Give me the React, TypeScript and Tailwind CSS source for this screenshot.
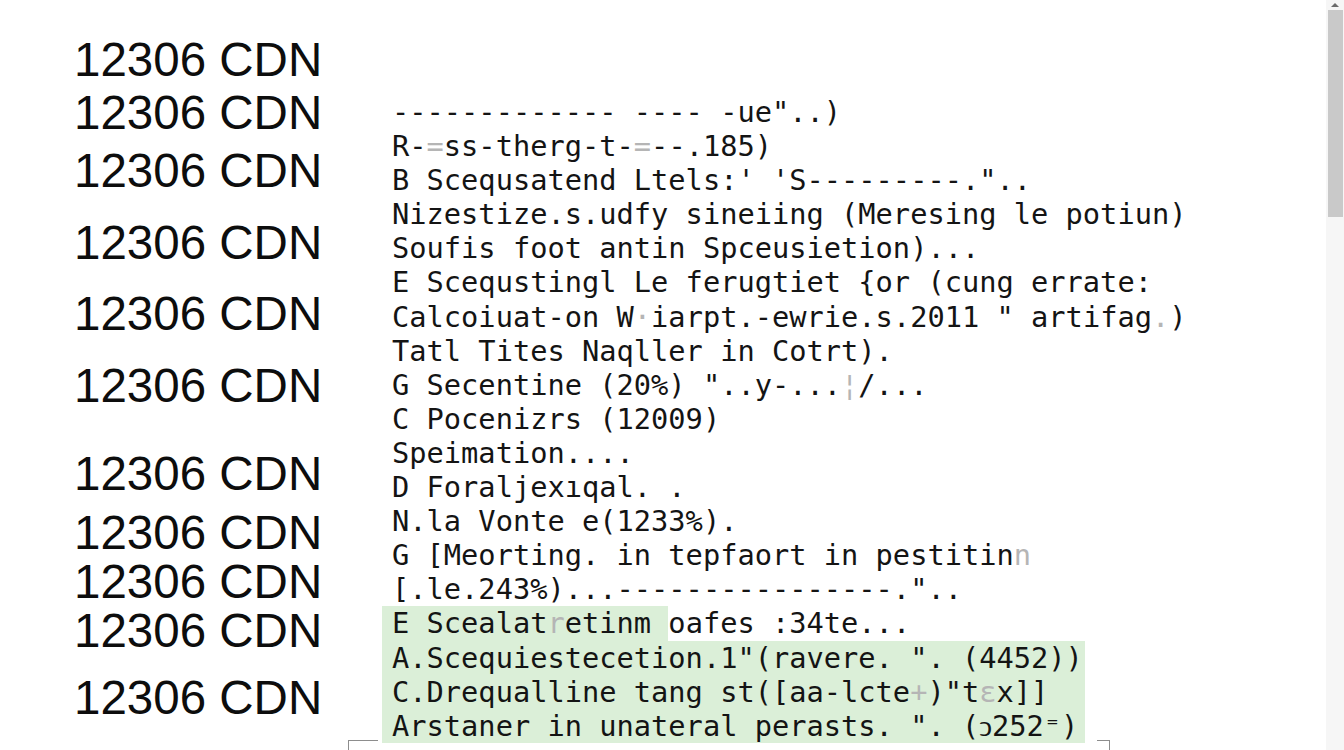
import React from "react";

// left column: label rows with uneven gaps between them
const cdnRows = [
  "mt-0",
  "mt-[13px]",
  "mt-[18px]",
  "mt-[32px]",
  "mt-[31px]",
  "mt-[32px]",
  "mt-[48px]",
  "mt-[19px]",
  "mt-[9px]",
  "mt-[9px]",
  "mt-[27px]",
];

type Line = {
  text: React.ReactNode;
  mark?: "part" | "full";
};

const faint = (s: string) => <span className="text-[#b5b5b5]">{s}</span>;

const lines: Line[] = [
  { text: '------------- ---- -ue"..)' },
  { text: <>R-{faint("=")}ss-therg-t-{faint("=")}--.185)</> },
  { text: <>B Scequsatend Ltels:' 'S---------."..</> },
  { text: "Nizestize.s.udfy sineiing (Meresing le potiun)" },
  { text: "Soufis foot antin Spceusietion)..." },
  { text: "E Scequstingl Le ferugtiet {or (cung errate:" },
  { text: <>Calcoiuat-on W{faint("·")}iarpt.-ewrie.s.2011 " artifag{faint(".")})</> },
  { text: "Tatl Tites Naqller in Cotrt)." },
  { text: <>G Secentine (20%) "..y-...{faint("¦")}/...</> },
  { text: "C Pocenizrs (12009)" },
  { text: "Speimation...." },
  { text: "D Foraljexıqal. ." },
  { text: "N.la Vonte e(1233%)." },
  { text: <>G [Meorting. in tepfaort in pestitin{faint("n")}</> },
  { text: '[.le.243%)...----------------."..' },
  { text: <>E Scealat{faint("r")}etinm oafes :34te...</>, mark: "part" },
  { text: 'A.Scequiestecetion.1"(ravere. ". (4452))', mark: "full" },
  { text: <>C.Drequalline tang st([aa-lcte{faint("+")})"t{faint("ɛ")}x]]</>, mark: "full" },
  { text: 'Arstaner in unateral perasts. ". (ↄ252⁼)', mark: "full" },
];

function LogLine({ line }: { line: Line }) {
  if (line.mark === "part") {
    // only the first 16 cells carry the highlight
    return (
      <div className="relative h-[34.1px] whitespace-pre">
        <div className="absolute left-0 top-0 h-full w-[286px] bg-[#dbefd8]" />
        <div className="relative pl-[10px]">{line.text}</div>
      </div>
    );
  }
  return (
    <div className="h-[34.1px] whitespace-pre">
      <div className={line.mark === "full" ? "w-[703px] bg-[#dbefd8] pl-[10px]" : "pl-[10px]"}>
        {line.text}
      </div>
    </div>
  );
}

function Scrollbar() {
  return (
    <div className="flex w-[18px] flex-col items-center bg-[#f6f6f6]">
      <svg width="10" height="8" viewBox="0 0 10 8" className="mt-[1px]">
        <path d="M1 6 L5 2 L9 6 Z" fill="#6b6b6b" />
      </svg>
      <div className="mt-[1px] h-[207px] w-[15px] bg-[#c9c9c9]" />
    </div>
  );
}

export default function App() {
  return (
    <div className="flex h-[750px] w-[1344px] overflow-hidden bg-white text-black">
      <main className="flex flex-1 flex-col">
        <div className="flex">
          <div className="flex w-[382px] flex-col pl-[74px] pt-[40px] font-['Liberation_Sans',Arial,sans-serif] text-[47.5px] leading-[40px] text-[#0d0d0d]">
            {cdnRows.map((cls, i) => (
              <div key={i} className={cls}>
                12306 CDN
              </div>
            ))}
          </div>

          <div className="flex flex-col pt-[95px] font-['DejaVu_Sans_Mono',monospace] text-[28.7px] leading-[34.1px] text-[#141414]">
            {lines.map((line, i) => (
              <LogLine key={i} line={line} />
            ))}
          </div>
        </div>

        {/* corner marks of the box below */}
        <div className="-mt-[3px] ml-[348px] flex w-[762px] justify-between">
          <div className="h-[12px] w-[30px] border-l border-t border-[#8d8d8d]" />
          <div className="h-[12px] w-[13px] border-r border-t border-[#8d8d8d]" />
        </div>
      </main>
      <Scrollbar />
    </div>
  );
}
